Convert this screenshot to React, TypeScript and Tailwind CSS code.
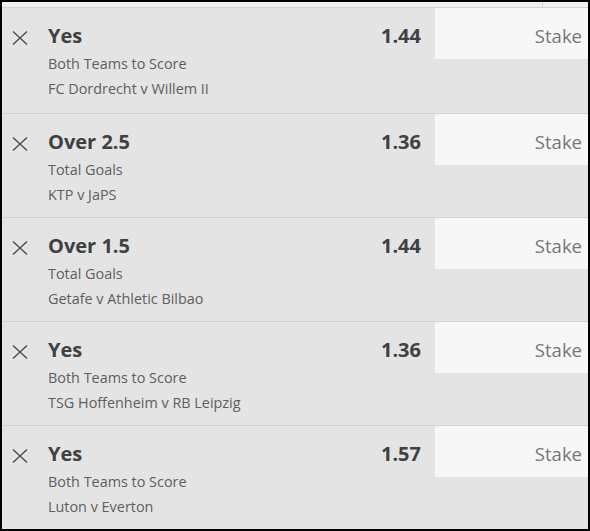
import React from "react";

type Bet = { sel: string; market: string; event: string; odds: string };

const bets: Bet[] = [
  { sel: "Yes", market: "Both Teams to Score", event: "FC Dordrecht v Willem II", odds: "1.44" },
  { sel: "Over 2.5", market: "Total Goals", event: "KTP v JaPS", odds: "1.36" },
  { sel: "Over 1.5", market: "Total Goals", event: "Getafe v Athletic Bilbao", odds: "1.44" },
  { sel: "Yes", market: "Both Teams to Score", event: "TSG Hoffenheim v RB Leipzig", odds: "1.36" },
  { sel: "Yes", market: "Both Teams to Score", event: "Luton v Everton", odds: "1.57" },
];

function XIcon() {
  return (
    <svg width="16" height="16" viewBox="0 0 16 16" fill="none">
      <path d="M1 1.5L15 14.5M15 1.5L1 14.5" stroke="#4a4a4a" strokeWidth="1.3" />
    </svg>
  );
}

function Row({ bet, first }: { bet: Bet; first: boolean }) {
  return (
    <div
      className={`flex items-start bg-[#e4e4e4] ${first ? "h-[105px]" : "h-[104px] border-t border-[#d2d2d2]"}`}
    >
      <div className="w-[46px] shrink-0 pt-[22px] pl-[10px]">
        <XIcon />
      </div>
      <div className="flex-1 pt-[18px]">
        <div className="text-[20px] leading-[20px] font-bold text-[#404040]">{bet.sel}</div>
        <div className="mt-[5px] text-[14.4px] leading-[25px] text-[#5e5e5e]">{bet.market}</div>
        <div className="text-[14.4px] leading-[25px] text-[#5e5e5e]">{bet.event}</div>
      </div>
      <div className="pt-[18px] mr-[14px] text-[20px] leading-[20px] font-bold text-[#404040]">
        {bet.odds}
      </div>
      <div className="w-[153px] h-[51px] shrink-0 bg-[#f7f7f7] flex justify-end pt-[18px] pr-[6px] text-[18.5px] leading-[20px] text-[#777777]">
        Stake
      </div>
    </div>
  );
}

export default function App() {
  return (
    <div
      className="w-[590px] h-[531px] bg-black p-[2px] overflow-hidden"
      style={{ fontFamily: '"Open Sans", "Noto Sans", sans-serif' }}
    >
      <div className="h-full bg-[#e4e4e4] flex flex-col">
        <div className="h-[6px] bg-[#f0f0f0] border-b border-[#d2d2d2] flex">
          <div className="w-[541px] border-r border-[#d2d2d2]" />
        </div>
        {bets.map((b, i) => (
          <Row key={i} bet={b} first={i === 0} />
        ))}
      </div>
    </div>
  );
}
